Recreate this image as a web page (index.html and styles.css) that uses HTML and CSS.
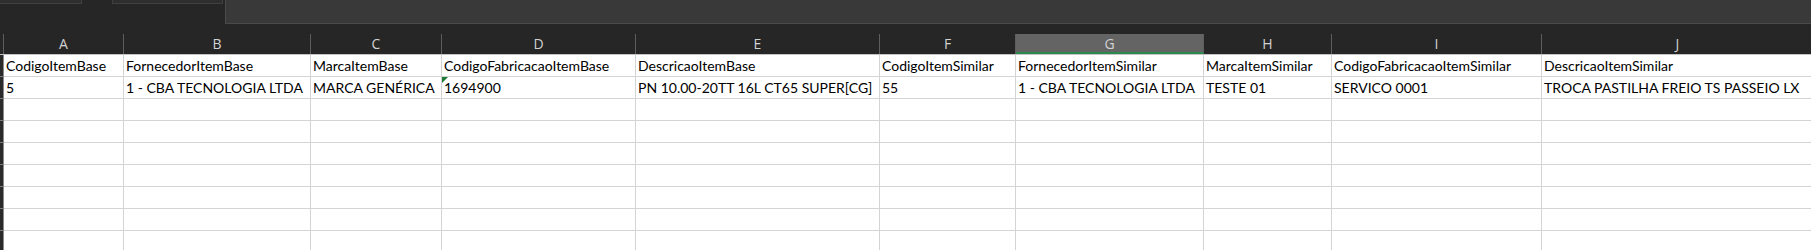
FILE: index.html
```html
<!DOCTYPE html>
<html lang="pt">
<head>
<meta charset="utf-8">
<title>Planilha</title>
<link rel="stylesheet" href="styles.css">
</head>
<body>
<div class="app">
  <div class="topbar">
    <div class="tab tab-one"></div>
    <div class="tab tab-two"></div>
    <div class="ribbon"></div>
  </div>
  <div class="sheet">
    <div class="row hdr">
      <div class="corner"></div>
      <div class="ch ca">A</div>
      <div class="ch cb">B</div>
      <div class="ch cc">C</div>
      <div class="ch cd">D</div>
      <div class="ch ce">E</div>
      <div class="ch cf">F</div>
      <div class="ch cg sel">G</div>
      <div class="ch chh">H</div>
      <div class="ch ci">I</div>
      <div class="ch cj">J</div>
    </div>
    <div class="row">
      <div class="rh"></div>
      <div class="cell ca">CodigoItemBase</div>
      <div class="cell cb">FornecedorItemBase</div>
      <div class="cell cc">MarcaItemBase</div>
      <div class="cell cd">CodigoFabricacaoItemBase</div>
      <div class="cell ce">DescricaoItemBase</div>
      <div class="cell cf">CodigoItemSimilar</div>
      <div class="cell cg">FornecedorItemSimilar</div>
      <div class="cell chh">MarcaItemSimilar</div>
      <div class="cell ci">CodigoFabricacaoItemSimilar</div>
      <div class="cell cj">DescricaoItemSimilar</div>
    </div>
    <div class="row">
      <div class="rh"></div>
      <div class="cell ca">5</div>
      <div class="cell cb">1 - CBA TECNOLOGIA LTDA</div>
      <div class="cell cc">MARCA GENÉRICA</div>
      <div class="cell cd flag">1694900</div>
      <div class="cell ce">PN 10.00-20TT 16L CT65 SUPER[CG]</div>
      <div class="cell cf">55</div>
      <div class="cell cg">1 - CBA TECNOLOGIA LTDA</div>
      <div class="cell chh">TESTE 01</div>
      <div class="cell ci">SERVICO 0001</div>
      <div class="cell cj">TROCA PASTILHA FREIO TS PASSEIO LX</div>
    </div>
    <div class="row"><div class="rh"></div><div class="cell ca"></div><div class="cell cb"></div><div class="cell cc"></div><div class="cell cd"></div><div class="cell ce"></div><div class="cell cf"></div><div class="cell cg"></div><div class="cell chh"></div><div class="cell ci"></div><div class="cell cj"></div></div>
    <div class="row"><div class="rh"></div><div class="cell ca"></div><div class="cell cb"></div><div class="cell cc"></div><div class="cell cd"></div><div class="cell ce"></div><div class="cell cf"></div><div class="cell cg"></div><div class="cell chh"></div><div class="cell ci"></div><div class="cell cj"></div></div>
    <div class="row"><div class="rh"></div><div class="cell ca"></div><div class="cell cb"></div><div class="cell cc"></div><div class="cell cd"></div><div class="cell ce"></div><div class="cell cf"></div><div class="cell cg"></div><div class="cell chh"></div><div class="cell ci"></div><div class="cell cj"></div></div>
    <div class="row"><div class="rh"></div><div class="cell ca"></div><div class="cell cb"></div><div class="cell cc"></div><div class="cell cd"></div><div class="cell ce"></div><div class="cell cf"></div><div class="cell cg"></div><div class="cell chh"></div><div class="cell ci"></div><div class="cell cj"></div></div>
    <div class="row"><div class="rh"></div><div class="cell ca"></div><div class="cell cb"></div><div class="cell cc"></div><div class="cell cd"></div><div class="cell ce"></div><div class="cell cf"></div><div class="cell cg"></div><div class="cell chh"></div><div class="cell ci"></div><div class="cell cj"></div></div>
    <div class="row"><div class="rh"></div><div class="cell ca"></div><div class="cell cb"></div><div class="cell cc"></div><div class="cell cd"></div><div class="cell ce"></div><div class="cell cf"></div><div class="cell cg"></div><div class="cell chh"></div><div class="cell ci"></div><div class="cell cj"></div></div>
    <div class="row"><div class="rh"></div><div class="cell ca"></div><div class="cell cb"></div><div class="cell cc"></div><div class="cell cd"></div><div class="cell ce"></div><div class="cell cf"></div><div class="cell cg"></div><div class="cell chh"></div><div class="cell ci"></div><div class="cell cj"></div></div>
  </div>
</div>
</body>
</html>
```

FILE: styles.css
```css
html, body {
  margin: 0;
  padding: 0;
  background: #262626;
  overflow: hidden;
}
.app {
  width: 1811px;
  height: 250px;
  overflow: hidden;
  background: #262626;
}
.topbar {
  height: 34px;
  display: flex;
  align-items: flex-start;
}
.tab {
  box-sizing: border-box;
  height: 4px;
  background: #2e2e2e;
  border: 1px solid #404040;
  border-top: none;
}
.tab-one {
  width: 82px;
  border-left: none;
}
.tab-two {
  width: 111px;
  margin-left: 30px;
}
.ribbon {
  box-sizing: border-box;
  flex: 1;
  height: 24px;
  margin-left: 2px;
  background: #393939;
  border-left: 1px solid #4a4a4a;
  border-bottom: 1px solid #4a4a4a;
}
.sheet {
  display: flex;
  flex-direction: column;
  width: 2000px;
}
.row {
  display: flex;
  height: 22px;
}
.row.hdr {
  height: 21px;
  border-bottom: 1px solid #c4c4c4;
  box-sizing: border-box;
}
.corner {
  box-sizing: border-box;
  width: 4px;
  height: 20px;
  border-right: 1px solid #5e5e5e;
}
.ch {
  box-sizing: border-box;
  flex: none;
  height: 20px;
  border-right: 1px solid #5e5e5e;
  color: #d2d2d2;
  font-family: "Open Sans", "Noto Sans", sans-serif;
  font-size: 14px;
  line-height: 20px;
  text-align: center;
}
.ch.sel {
  background: #646464;
  border-bottom: 2px solid #2a8a4e;
  line-height: 19px;
}
.rh {
  box-sizing: border-box;
  flex: none;
  width: 4px;
  height: 22px;
  background: #2a2a2a;
  border-right: 1px solid #8a8a8a;
  border-bottom: 1px solid #7a7a7a;
}
.cell {
  box-sizing: border-box;
  flex: none;
  height: 22px;
  padding: 1px 0 0 2px;
  background: #ffffff;
  border-right: 1px solid #d4d4d4;
  border-bottom: 1px solid #d4d4d4;
  color: #000000;
  font-family: Lato, "Open Sans", sans-serif;
  font-size: 14px;
  line-height: 20px;
  white-space: nowrap;
  overflow: hidden;
}
.flag {
  position: relative;
}
.flag::before {
  content: "";
  position: absolute;
  left: 0;
  top: 0;
  border-top: 6px solid #1f7a3a;
  border-right: 6px solid transparent;
}
.ca { width: 120px; }
.cb { width: 187px; }
.cc { width: 131px; }
.cd { width: 194px; }
.ce { width: 244px; }
.cf { width: 136px; }
.cg { width: 188px; }
.chh { width: 128px; }
.ci { width: 210px; }
.cj { width: 272px; }
```
